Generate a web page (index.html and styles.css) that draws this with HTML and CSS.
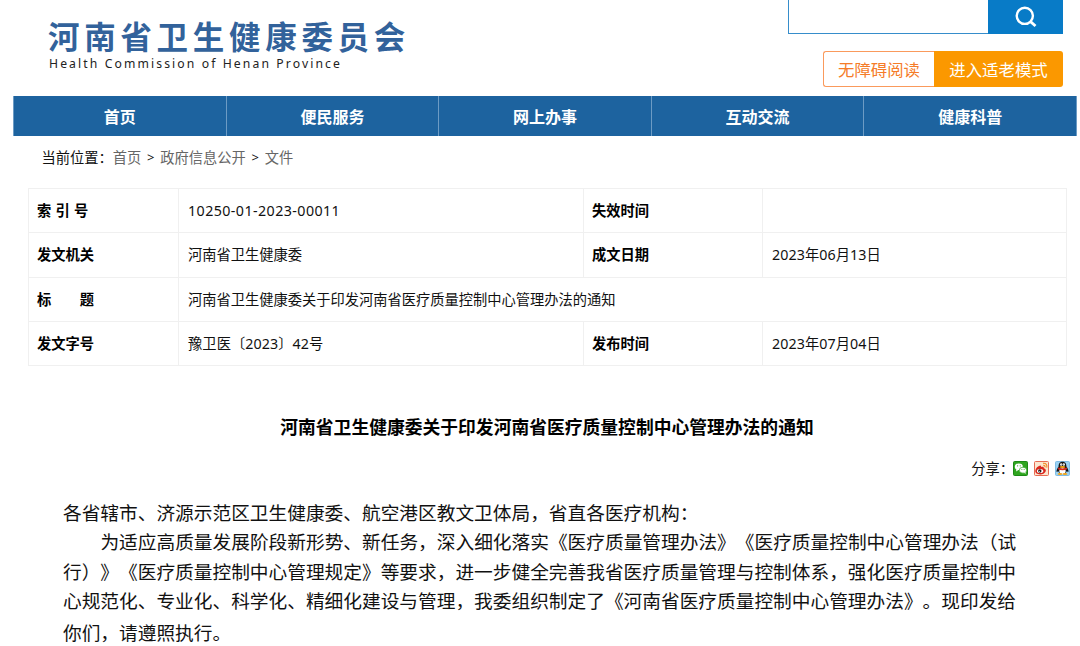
FILE: index.html
```html
<!DOCTYPE html>
<html lang="zh-CN">
<head>
<meta charset="utf-8">
<title>河南省卫生健康委员会</title>
<link rel="stylesheet" href="styles.css">
</head>
<body>
<header class="header">
  <div class="brand">
    <div class="brand-cn">河南省卫生健康委员会</div>
    <div class="brand-en">Health Commission of Henan Province</div>
  </div>
  <div class="tools">
    <div class="search">
      <div class="search-input"></div>
      <div class="search-btn">
        <svg width="22" height="22" viewBox="0 0 22 22" fill="none" stroke="#fff"><circle cx="9.8" cy="9.8" r="8.1" stroke-width="2.4"/><path d="M15.2 15.4L20.5 20" stroke-width="2.8"/></svg>
      </div>
    </div>
    <div class="modes">
      <a class="mode mode-free">无障碍阅读</a>
      <a class="mode mode-old">进入适老模式</a>
    </div>
  </div>
</header>
<nav class="nav">
  <a>首页</a><a>便民服务</a><a>网上办事</a><a>互动交流</a><a>健康科普</a>
</nav>
<div class="crumbs"><span>当前位置：</span><a>首页</a><i>&gt;</i><a>政府信息公开</a><i>&gt;</i><a>文件</a></div>
<table class="meta">
  <colgroup><col class="c1"><col class="c2"><col class="c3"><col class="c4"></colgroup>
  <tr><th class="spaced">索 引 号</th><td class="index-no">10250-01-2023-00011</td><th>失效时间</th><td></td></tr>
  <tr><th>发文机关</th><td>河南省卫生健康委</td><th>成文日期</th><td class="num">2023年06月13日</td></tr>
  <tr><th>标　　题</th><td colspan="3">河南省卫生健康委关于印发河南省医疗质量控制中心管理办法的通知</td></tr>
  <tr><th>发文字号</th><td class="num">豫卫医〔2023〕42号</td><th>发布时间</th><td class="num">2023年07月04日</td></tr>
</table>
<h1 class="title">河南省卫生健康委关于印发河南省医疗质量控制中心管理办法的通知</h1>
<div class="share">
  <span>分享：</span>
  <svg width="15" height="15" viewBox="0 0 15 15"><rect x=".5" y=".5" width="14" height="14" rx="1" fill="#2fa51f" stroke="#1c8a15"/><ellipse cx="5.8" cy="5.8" rx="4" ry="3.3" fill="#fff"/><path d="M3.5 8L3 10.4L5.5 9z" fill="#fff"/><ellipse cx="10" cy="9.2" rx="3.7" ry="3" fill="#fff" stroke="#2fa51f" stroke-width=".7"/><path d="M11 11.5L12.6 13L12.4 10.8z" fill="#fff"/><g fill="#2fa51f"><circle cx="4.6" cy="4.8" r=".6"/><circle cx="7.2" cy="4.8" r=".6"/><circle cx="8.9" cy="8.5" r=".5"/><circle cx="11.1" cy="8.5" r=".5"/></g></svg>
  <svg width="15" height="15" viewBox="0 0 15 15"><rect x=".5" y=".5" width="14" height="14" rx="1" fill="#fce6cf" stroke="#e76b52"/><path d="M1.3 9.8C1.5 7 4 5.2 6.2 4.5C7 4.4 7.2 5.5 7 6.1C8.6 5.5 10 5.5 9.8 7.2C14 8.3 11.2 13.4 6.3 13.4C3.2 13.4 1.1 12 1.3 9.8z" fill="#d9261c"/><ellipse cx="6.1" cy="9.9" rx="3.2" ry="2" fill="#fff"/><circle cx="5.8" cy="10" r="1.7" fill="#222"/><circle cx="5.3" cy="10.4" r=".5" fill="#fff"/><path d="M9 2.4C12 1.8 13.5 4.2 12.7 6.7M9.3 4.4C10.8 4.2 11.3 5.3 11 6.3" fill="none" stroke="#f08a24" stroke-width="1.1"/></svg>
  <svg width="15" height="15" viewBox="0 0 15 15"><rect x=".5" y=".5" width="14" height="14" rx="1" fill="#9bd2f3" stroke="#7fbce5"/><path d="M7.5 .8C4.5 .8 3.6 3 3.6 5.5C2.4 7.2 1.2 9 1.6 11L3.3 10.2L4.5 12.5H10.5L11.7 10.2L13.4 11C13.8 9 12.6 7.2 11.4 5.5C11.4 3 10.5 .8 7.5 .8z" fill="#151515"/><ellipse cx="7.5" cy="10" rx="3.2" ry="3" fill="#fff"/><path d="M3.2 6.3C6 7.9 9 7.9 11.8 6.3L12 8.3C9 9.6 6 9.6 3 8.3z" fill="#dc281c"/><ellipse cx="6.2" cy="3.6" rx="1.1" ry="1.4" fill="#fff"/><ellipse cx="8.8" cy="3.6" rx="1.1" ry="1.4" fill="#fff"/><circle cx="6.6" cy="3.9" r=".4"/><circle cx="8.4" cy="3.9" r=".4"/><ellipse cx="7.5" cy="5.9" rx="2.8" ry="1" fill="#f6a718"/><ellipse cx="5" cy="13" rx="2.4" ry="1.1" fill="#f6a718"/><ellipse cx="10" cy="13" rx="2.4" ry="1.1" fill="#f6a718"/></svg>
</div>
<article class="article">
  <p>各省辖市、济源示范区卫生健康委、航空港区教文卫体局，省直各医疗机构：</p>
  <p class="indent">为适应高质量发展阶段新形势、新任务，深入细化落实《医疗质量管理办法》《医疗质量控制中心管理办法（试<br>行）》《医疗质量控制中心管理规定》等要求，进一步健全完善我省医疗质量管理与控制体系，强化医疗质量控制中<br>心规范化、专业化、科学化、精细化建设与管理，我委组织制定了《河南省医疗质量控制中心管理办法》。现印发给<br><span class="last">你们，请遵照执行。</span></p>
</article>
</body>
</html>
```
FILE: styles.css
```css
* { box-sizing: border-box; }
body {
  margin: 0;
  height: 646px;
  overflow: hidden;
  background: #fff;
  color: #111;
  font-family: "Noto Sans", "Noto Sans CJK SC", sans-serif;
  font-size: 14.26px;
  text-spacing-trim: space-all;
}
.header {
  display: flex;
  justify-content: space-between;
  height: 96px;
  padding: 0 17px 0 48px;
}
.brand { padding-top: 18px; white-space: nowrap; }
.brand-cn {
  font-size: 31.5px;
  line-height: 37px;
  letter-spacing: 4.7px;
  font-weight: 700;
  color: #32629b;
}
.brand-en {
  padding: 1px 0 0 1px;
  font-size: 12.2px;
  line-height: 16px;
  letter-spacing: 2.1px;
  color: #222;
}
.tools { display: flex; flex-direction: column; align-items: flex-end; }
.search { display: flex; width: 275px; height: 34px; }
.search-input {
  flex: 1;
  border: solid #368dcb;
  border-width: 0 0 1px 1px;
}
.search-btn {
  display: flex;
  justify-content: center;
  width: 75px;
  padding-top: 6px;
  background: #087bc7;
}
.modes { display: flex; margin-top: 17px; font-size: 16.4px; text-align: center; }
.mode { height: 36px; }
.mode-free {
  width: 111px;
  border: 1px solid #fa9a5c;
  border-right: 0;
  border-radius: 3px 0 0 3px;
  color: #f57c28;
  line-height: 36px;
}
.mode-old {
  width: 129px;
  border-radius: 0 3px 3px 0;
  background: #fb9800;
  color: #fff;
  line-height: 38px;
}
.nav {
  display: flex;
  height: 40px;
  margin: 0 3px 0 13px;
  border-left: 1px solid #6c9bc4;
  background: #1d639f;
}
.nav a {
  flex: 1;
  border-right: 1px solid #6c9bc4;
  color: #fff;
  font-size: 16px;
  font-weight: 700;
  line-height: 43px;
  text-align: center;
}
.crumbs {
  display: flex;
  height: 52px;
  padding-left: 41.5px;
  line-height: 43px;
}
.crumbs a { color: #666; }
.crumbs i { width: 19px; font-style: normal; font-size: 13px; text-align: center; }
.meta {
  width: 1039px;
  margin-left: 28px;
  border-collapse: collapse;
  table-layout: fixed;
}
.c1 { width: 150px; }
.c2 { width: 405px; }
.c3 { width: 179px; }
.meta th, .meta td {
  height: 44.3px;
  padding: 1px 8px 0;
  border: 1px solid #f0f0f0;
  line-height: 20px;
  text-align: left;
  white-space: nowrap;
}
.meta td { padding-left: 9px; }
.meta th { font-weight: 700; color: #000; }
.meta .spaced { word-spacing: .6px; }
.meta .index-no { letter-spacing: .42px; }
.meta .num { letter-spacing: .08px; }
.title {
  margin: 47px 0 0 14px;
  font-size: 17.8px;
  font-weight: 700;
  line-height: 28px;
  text-align: center;
  color: #000;
}
.share {
  display: flex;
  align-items: center;
  justify-content: flex-end;
  gap: 6px;
  height: 20px;
  margin: 17px 10px 0 0;
}
.share span { margin: -1px -7px 0 0; }
.article {
  padding: 19.5px 0 0 63px;
  font-size: 18.7px;
  line-height: 29.6px;
  white-space: nowrap;
}
.article p { margin: 0; }
.indent { text-indent: 2em; }
.last { display: inline-block; text-indent: 0; line-height: 33px; }
```
